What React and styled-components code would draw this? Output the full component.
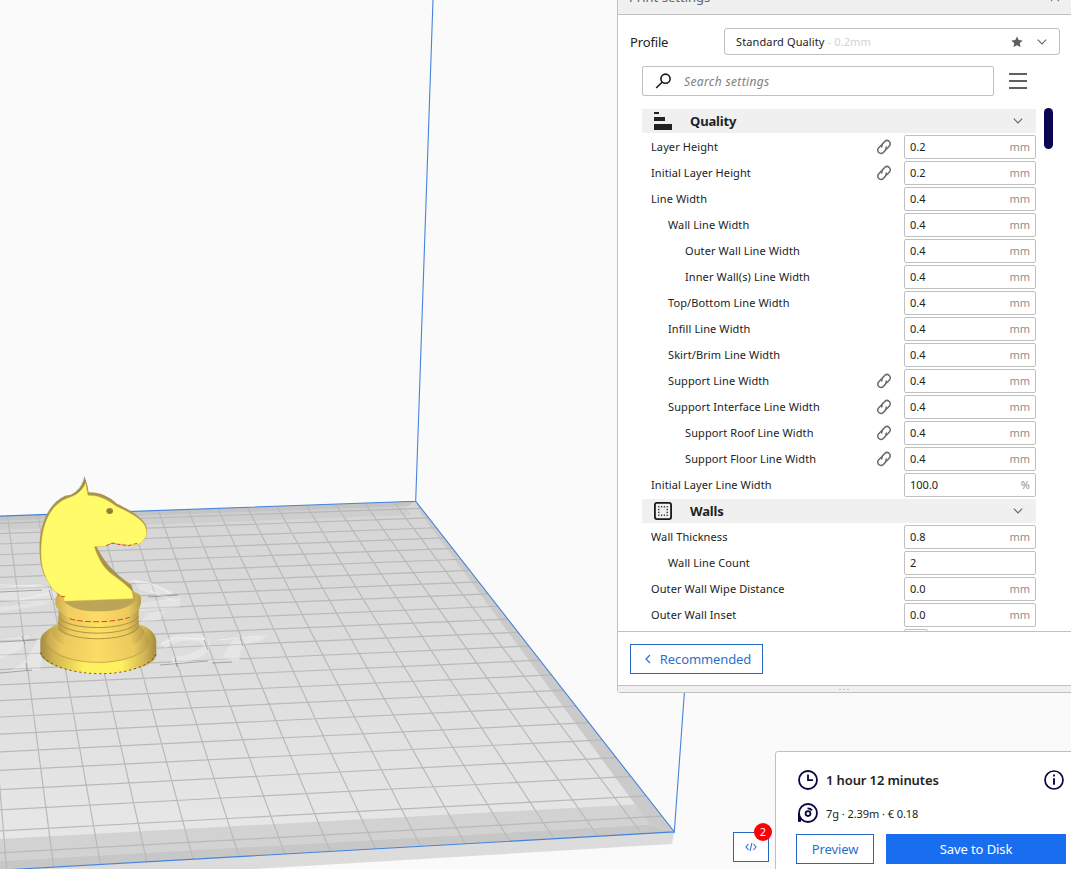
import React from "react";
import styled, { createGlobalStyle } from "styled-components";

const GlobalStyle = createGlobalStyle`
  * { box-sizing: border-box; }
  body {
    margin: 0;
    background: #fafafa;
    overflow: hidden;
    font-family: "Noto Sans", "Open Sans", sans-serif;
    color: #222;
  }
`;

const Window = styled.main`
  position: relative;
  width: 1071px;
  height: 869px;
  overflow: hidden;
  background: #fafafa;
`;

const Scene = styled.svg`
  display: block;
`;

const SettingsPanel = styled.section`
  position: absolute;
  left: 617px;
  top: -16px;
  width: 470px;
  height: 709px;
  display: flex;
  flex-direction: column;
  background: #fff;
  border: 1px solid #c0c0c0;
  border-radius: 3px;
`;

const PanelHeader = styled.header`
  flex: none;
  height: 30px;
  padding: 3px 26px 0 11px;
  display: flex;
  justify-content: space-between;
  background: #f0f0f0;
  border-bottom: 1px solid #c0c0c0;
  font-size: 13px;
  line-height: 18px;
  color: #666;
`;

const CloseIcon = styled.svg`
  margin-top: 4px;
`;

const ProfileRow = styled.div`
  flex: none;
  height: 27px;
  margin: 13px 26px 0 12px;
  display: flex;
  align-items: center;
  justify-content: space-between;
  font-size: 13px;
  letter-spacing: -0.15px;
`;

const ProfileSelect = styled.div`
  width: 336px;
  height: 27px;
  padding: 0 11px;
  display: flex;
  align-items: center;
  border: 1px solid #c0c0c0;
  border-radius: 3px;
  font-size: 11px;
  letter-spacing: 0.12px;
`;

const ProfileName = styled.span`
  flex: 1;
  white-space: pre;
`;

const Muted = styled.span`
  color: #d2d2d2;
`;

const SelectIcons = styled.span`
  display: flex;
  align-items: center;
  gap: 14px;
  padding-right: 1px;
`;

const SearchRow = styled.div`
  flex: none;
  height: 30px;
  margin: 11px 0 0 24px;
  display: flex;
  align-items: center;
  gap: 15px;
`;

const SearchBox = styled.div`
  width: 352px;
  height: 30px;
  padding-left: 12px;
  display: flex;
  align-items: center;
  gap: 11px;
  border: 1px solid #c0c0c0;
  border-radius: 2px;
  font-size: 12px;
  font-style: italic;
  letter-spacing: 0.36px;
  color: #808080;
`;

const ListArea = styled.div`
  flex: 1;
  min-height: 0;
  margin: 12px 0 0 24px;
  display: flex;
  align-items: flex-start;
  gap: 8px;
  overflow: hidden;
`;

const SettingsList = styled.div`
  width: 394px;
  height: 100%;
  overflow: hidden;
`;

const ScrollThumb = styled.div`
  width: 9px;
  height: 41px;
  border-radius: 5px;
  background: #08074f;
`;

const CategoryBar = styled.div`
  height: 24px;
  margin: 1px 0;
  padding: 0 13px 0 12px;
  display: flex;
  align-items: center;
  background: #f0f0f0;
  font-size: 13px;
  font-weight: 700;
  letter-spacing: -0.15px;
`;

const CategoryTitle = styled.span`
  flex: 1;
  padding-left: 18px;
`;

const Setting = styled.div`
  height: 26px;
  padding-left: ${(p) => 9 + p.$depth * 17}px;
  display: flex;
  align-items: center;
  font-size: 11px;
`;

const SettingLabel = styled.span`
  flex: 1;
  padding-bottom: 2px;
  white-space: nowrap;
  letter-spacing: 0.1px;
`;

const LinkSlot = styled.span`
  width: 28px;
  display: flex;
`;

const Field = styled.div`
  width: 132px;
  height: 24px;
  padding: 0 5px 2px;
  display: flex;
  align-items: center;
  justify-content: space-between;
  border: 1px solid #c0c0c0;
  border-radius: 2px;
`;

const Unit = styled.span`
  color: #909090;
`;

const PartialCheckbox = styled.div`
  width: 24px;
  height: 24px;
  margin: 1px 0 0 262px;
  border: 1px solid #c0c0c0;
  border-radius: 2px;
`;

const PanelFooter = styled.footer`
  flex: none;
  height: 54px;
  padding: 12px;
  border-top: 1px solid #c0c0c0;
`;

const ResizeHandle = styled.div`
  flex: none;
  height: 7px;
  display: flex;
  justify-content: center;
  align-items: center;
  gap: 2px;
  padding-right: 16px;
  background: #f0f0f0;
  border-top: 1px solid #c0c0c0;
`;

const HandleDot = styled.i`
  width: 2px;
  height: 1px;
  background: #c0c0c0;
`;

const Button = styled.button`
  flex: none;
  width: ${(p) => p.$width}px;
  height: 30px;
  padding: 0 0 0 ${(p) => p.$indent || 0}px;
  display: flex;
  align-items: center;
  justify-content: center;
  gap: 9px;
  border: 1px solid ${(p) => (p.$primary ? "#196ef0" : "#2368bd")};
  border-radius: 0;
  background: ${(p) => (p.$primary ? "#196ef0" : "#fff")};
  color: ${(p) => (p.$primary ? "#fff" : "#2a70d0")};
  font: 13px "Noto Sans", sans-serif;
  letter-spacing: -0.1px;
`;

const ActionPanel = styled.section`
  position: absolute;
  left: 775px;
  top: 751px;
  width: 312px;
  height: 130px;
  padding: 17px 20px 0 20px;
  display: flex;
  flex-direction: column;
  background: #fff;
  border: 1px solid #c0c0c0;
  border-radius: 3px;
`;

const EstimateRow = styled.div`
  height: ${(p) => p.$height}px;
  margin-bottom: ${(p) => p.$gap}px;
  padding: 0 2px;
  display: flex;
  align-items: center;
  gap: 8px;
  font-size: ${(p) => (p.$strong ? 13 : 11)}px;
  font-weight: ${(p) => (p.$strong ? 600 : 400)};
  letter-spacing: ${(p) => (p.$strong ? -0.12 : -0.06)}px;
`;

const EstimateText = styled.span`
  flex: 1;
`;

const ButtonRow = styled.div`
  display: flex;
  gap: 12px;
`;

const ScriptButton = styled.div`
  position: absolute;
  left: 733px;
  top: 832px;
  width: 36px;
  height: 30px;
  display: flex;
  align-items: center;
  justify-content: center;
  background: #fff;
  border: 1px solid #2368bd;
`;

const Badge = styled.span`
  position: absolute;
  left: 20px;
  top: -10px;
  width: 18px;
  height: 18px;
  border-radius: 50%;
  background: #fb0007;
  color: #fff;
  font-size: 11px;
  line-height: 18px;
  text-align: center;
`;

const Chevron = () => (
  <svg width="10" height="6" viewBox="0 0 10 6" fill="none" stroke="#666" strokeWidth="1.1">
    <path d="M.8.7 5 4.9 9.2.7" />
  </svg>
);

const LinkIcon = () => (
  <svg width="16" height="16" viewBox="0 0 16 16" fill="none" stroke="#6a6a6a" strokeWidth="1.5">
    <path d="M5.900 8.400C5.300 6.700 5.800 5.500 6.900 4.400L8.700 2.600A3.150 3.150 0 0 1 13.400 7L11.600 8.900Q10.800 9.800 9.300 9.900" />
    <path d="M10.100 7.600C10.700 9.300 10.200 10.500 9.100 11.600L7.300 13.400A3.150 3.150 0 0 1 2.600 9L4.400 7.100Q5.200 6.200 6.700 6.100" />
  </svg>
);

const StarIcon = () => (
  <svg width="12" height="12" viewBox="0 0 12 12" fill="#606060">
    <path d="M6 .5 7.7 4l3.9.5-2.8 2.7.7 3.9L6 9.2l-3.5 1.9.7-3.9L.4 4.500 4.300 4z" />
  </svg>
);

const SearchIcon = () => (
  <svg width="18" height="18" viewBox="0 0 18 18" fill="none" stroke="#191919" strokeWidth="1.6">
    <circle cx="10.5" cy="6.7" r="4.6" />
    <path d="M7.3 10 1.2 16" />
  </svg>
);

const MenuIcon = () => (
  <svg width="18" height="18" viewBox="0 0 18 18" fill="#606060" shapeRendering="crispEdges">
    <path d="M0 1h18v2H0zM0 8h18v2H0zM0 15h18v2H0z" />
  </svg>
);

const QualityIcon = () => (
  <svg width="18" height="18" viewBox="0 0 18 18" fill="#222" shapeRendering="crispEdges">
    <path d="M0 0h5v2H0zM0 5h11v4H0zM0 12h18v6H0z" />
  </svg>
);

const dots = [4, 7, 10, 13];

const WallsIcon = () => (
  <svg width="18" height="18" viewBox="0 0 18 18" fill="#222">
    <rect x=".9" y=".9" width="16.2" height="16.2" rx="2" fill="none" stroke="#191919" strokeWidth="1.8" />
    {[4.3, 7.1, 9.9, 12.7].map((x) =>
      [4.3, 7.1, 9.9, 12.7]
        .filter((y) => x < 5 || x > 12 || y < 5 || y > 12)
        .map((y) => <rect key={`${x}-${y}`} x={x - 0.15} y={y - 0.15} width="1.3" height="1.3" />)
    )}
  </svg>
);

const ClockIcon = () => (
  <svg width="20" height="20" viewBox="0 0 20 20" fill="none" stroke="#08073f" strokeWidth="1.8">
    <circle cx="10" cy="10" r="9" />
    <path d="M10 4.5V10.2h5" />
  </svg>
);

const SpoolIcon = () => (
  <svg width="20" height="20" viewBox="0 0 20 20" fill="none" stroke="#08073f" strokeWidth="1.8">
    <circle cx="10" cy="10" r="9" />
    <path d="M1 10V18.800" strokeWidth="2" />
    <path d="M1 13v5.800h2V15z" fill="#08073f" stroke="none" />
    <circle cx="10" cy="10.600" r="2.400" />
    <path d="M9.500 5.300A5.300 5.300 0 0 1 14 7.400" />
  </svg>
);

const InfoIcon = () => (
  <svg width="20" height="20" viewBox="0 0 20 20" fill="none" stroke="#08073f" strokeWidth="1.7">
    <circle cx="10" cy="10" r="9" />
    <path d="M10 4.6v2M10 8.2v6.6" strokeWidth="1.9" />
  </svg>
);

// Projects build-plate coordinates (in 10 mm cells from the front-right corner) to the screen.
const FR = [674.3, 831.9];
const BR = [415.7, 501.3];
const FL = [6.7, 869.8];
const BL = [-23, 516.9];
const COLS = 14.75;
const ROWS = 23.5;
const det = (FL[0] - BL[0]) * (BR[1] - BL[1]) - (BR[0] - BL[0]) * (FL[1] - BL[1]);
const rx = BL[0] + FR[0] - BR[0] - FL[0];
const ry = BL[1] + FR[1] - BR[1] - FL[1];
const P = (rx * (BR[1] - BL[1]) - (BR[0] - BL[0]) * ry) / det;
const Q = ((FL[0] - BL[0]) * ry - rx * (FL[1] - BL[1])) / det;

function project(u, v) {
  const s = u / COLS;
  const t = v / ROWS;
  const w = 1 + P * s + Q * t;
  return [0, 1].map((i) =>
    ((FR[i] + s * (FL[i] * (1 + P) - FR[i]) + t * (BR[i] * (1 + Q) - FR[i])) / w).toFixed(2)
  );
}
const poly = (...pts) => pts.map(([u, v]) => project(u, v).join(",")).join(" ");
const seg = (a, b) => `M${project(...a).join(" ")}L${project(...b).join(" ")}`;

const gridPath = [
  ...Array.from({ length: 17 }, (_, i) => seg([i + 0.75, 0], [i + 0.75, ROWS])),
  ...Array.from({ length: 23 }, (_, i) => seg([0, i + 0.75], [18, i + 0.75])),
].join("");

const BuildPlate = () => (
  <g>
    <polygon points="674,832 672,844 253,869 -40,884 0,869" fill="#dcdcdc" />
    <polygon points={poly([0, 0], [18, 0], [18, ROWS], [0, ROWS])} fill="url(#plate)" />
    <polygon points="-10,839.5 636,804.5 650,824.5 -10,861.5" fill="#d2d2d2" />
    <polygon points="-10,861.5 650,824.5 674.3,831.9 6.7,869.8 -10,871" fill="#c7c7c7" />
    <polygon points="415.7,501.3 421,514 650,824.5 674.3,831.9" fill="#cacaca" />
    <polygon points={poly([0, ROWS], [18, ROWS], [18, 23], [0.4, 23])} fill="#c4c4c4" />
    <polygon points={poly([0.5, 23], [18, 23], [18, 22.1], [0.5, 22.1])} fill="#cecece" />
    <path d={gridPath} stroke="#b9b9b9" strokeWidth="1.2" fill="none" />
  </g>
);

const PlateLogo = () => (
  <g>
    <g fill="#fff" fillOpacity=".26">
      <path d="M0 587 40 584 65 596 40 604 0 600zM0 607 45 602 50 604 0 612z" />
      <path d="M132 579 155 584 173 592 165 598 140 590zM140 603 180 597 180 607 140 611z" />
      <path d="M148 613 165 611 160 620 140 623zM0 640 30 635 20 650 0 659zM24 662 40 637 46 640 40 670 8 672z" />
      <path d="M222 657 233 640 268 635 262 640 243 645 238 661z" />
    </g>
    <path d="M163 646Q172 637 190 637T206 648Q200 657 172 661" fill="none" stroke="#fff" strokeOpacity=".28" strokeWidth="7" />
    <g fill="none" stroke="#fff" strokeOpacity=".5" strokeWidth="1">
      <path d="M0 585 36 586M20 600 50 593M130 581 150 583 172 594M150 591 175 601M160 645 175 638 205 639M218 640 260 636M170 663 240 659" />
    </g>
    <g fill="none" stroke="#666" strokeOpacity=".5" strokeWidth="1">
      <path d="M0 592 42 590M148 597 178 595M0 642 36 640M22 636 25 644M49 590 52 600M204 640 208 650M240 637 243 646M160 665 208 661M212 663 232 662M0 673 32 670M175 658 177 667M26 663 27 671" />
    </g>
  </g>
);

const Knight = () => (
  <g transform="translate(30 470) scale(.33333)">
    <path d="M31 512C31 490 55 480 75 465L335 465C360 475 379 492 379 515V555C374 590 285 612 202 611 115 610 32 580 31 550z" fill="url(#base)" />
    <path d="M31 548C50 585 120 609 202 611S365 588 378 552" fill="none" stroke="#40391c" strokeWidth="2.5" strokeDasharray="6 9" />
    <path d="M49 512C55 545 120 575 205 575S350 550 358 512C356 495 340 482 325 462H85C70 482 50 490 49 512z" fill="url(#foot)" />
    <path d="M49 518C60 554 130 577 205 577S350 553 358 516" fill="none" stroke="#b59a48" strokeWidth="2.5" />
    <path d="M66 482C66 517 120 542 205 542S344 516 342 482L322 456H88z" fill="url(#foot)" />
    <path d="M86 420 84 476C104 520 306 520 326 474V418z" fill="url(#stem)" />
    <g fill="none" stroke="#a98d43" strokeWidth="2.8">
      <path d="M84 440C110 484 300 484 326 438" />
      <path d="M84 456C110 501 300 501 326 454" />
      <path d="M84 472C110 518 300 518 326 470" />
    </g>
    <path d="M76 390C78 365 105 358 205 357S332 366 333 386V398C330 432 280 458 205 458S82 432 76 402z" fill="url(#rim)" />
    <path d="M101 393 316 372 316 392C300 413 260 424 205 424S120 414 101 393z" fill="#bca557" />
    <path d="M119 446C155 459 250 459 298 442" fill="none" stroke="#e32612" strokeWidth="2.6" strokeDasharray="17 7" />
    <path d="M122 74C145 65 160 44 164 20L172 45 176 67C205 66 235 77 261 101 291 115 335 139 348 166 354 180 351 194 340 207L200 229C220 274 250 307 304 345L312 368 300 380 100 376C62 356 34 316 30 263 23 187 43 107 105 77z" fill="#a9944b" />
    <path d="M122 81C146 70 159 58 167 38L174 76C206 75 235 90 259 109 286 121 325 139 342 162 349 172 351 183 349 195 342 215 326 226 307 227L246 219 226 229 193 230C205 266 221 296 252 317 273 333 297 350 307 365L310 386 102 394 101 380C62 367 35 312 33 259 31 188 47 103 122 81z" fill="#fffb69" stroke="#d9b04a" strokeWidth="1.5" />
    <path d="M125 76C147 60 158 42 164 19M136 74C151 61 158 48 164 31" fill="none" stroke="#776b39" strokeWidth="2" strokeDasharray="3 2" />
    <path d="M228 227 247 219 262 223 295 227 325 219M80 370 93 380 107 379" fill="none" stroke="#dc371b" strokeWidth="2.5" strokeDasharray="12 5" />
    <ellipse cx="239" cy="123" rx="10" ry="9" fill="#96853f" />
    <path d="m233 120 7 8 7-5" fill="none" stroke="#70652f" strokeWidth="2" />
  </g>
);

const Gradient = ({ id, stops, vertical }) => (
  <linearGradient id={id} x1="0" y1="0" x2={vertical ? 0 : 1} y2={vertical ? 1 : 0}>
    {stops.map(([offset, color]) => (
      <stop key={offset} offset={offset} stopColor={color} />
    ))}
  </linearGradient>
);

const Viewport3D = () => (
  <Scene width="1071" height="869" viewBox="0 0 1071 869">
    <defs>
      <Gradient id="plate" vertical stops={[[0, "#d5d5d5"], [0.5, "#dfdfdf"], [1, "#e9e9e9"]]} />
      <Gradient id="base" stops={[[0, "#a48c42"], [0.12, "#d2b452"], [0.38, "#fff060"], [0.7, "#fff060"], [0.9, "#d2b452"], [1, "#a48c42"]]} />
      <Gradient id="foot" stops={[[0, "#c3a54d"], [0.15, "#ebca5e"], [0.5, "#fcdc65"], [0.85, "#ebca5e"], [1, "#b89b48"]]} />
      <Gradient id="stem" stops={[[0, "#b69a47"], [0.15, "#ebcb5e"], [0.5, "#ffe066"], [0.85, "#ebcb5e"], [1, "#b69a47"]]} />
      <Gradient id="rim" stops={[[0, "#cbac50"], [0.15, "#f0ce60"], [0.5, "#ffdb66"], [0.85, "#eccb5e"], [1, "#b99d4b"]]} />
    </defs>
    <BuildPlate />
    <PlateLogo />
    <g stroke="#4583d9" strokeWidth="1.1" fill="none">
      <path d="M433 0 415.7 501.3 674.3 831.9 694 560M415.7 501.3-23 516.9M674.3 831.9 6.7 869.8" />
    </g>
    <Knight />
  </Scene>
);

const sections = [
  {
    title: "Quality",
    Icon: QualityIcon,
    rows: [
      ["Layer Height", 0, "0.2", "mm", true],
      ["Initial Layer Height", 0, "0.2", "mm", true],
      ["Line Width", 0, "0.4", "mm"],
      ["Wall Line Width", 1, "0.4", "mm"],
      ["Outer Wall Line Width", 2, "0.4", "mm"],
      ["Inner Wall(s) Line Width", 2, "0.4", "mm"],
      ["Top/Bottom Line Width", 1, "0.4", "mm"],
      ["Infill Line Width", 1, "0.4", "mm"],
      ["Skirt/Brim Line Width", 1, "0.4", "mm"],
      ["Support Line Width", 1, "0.4", "mm", true],
      ["Support Interface Line Width", 1, "0.4", "mm", true],
      ["Support Roof Line Width", 2, "0.4", "mm", true],
      ["Support Floor Line Width", 2, "0.4", "mm", true],
      ["Initial Layer Line Width", 0, "100.0", "%"],
    ],
  },
  {
    title: "Walls",
    Icon: WallsIcon,
    rows: [
      ["Wall Thickness", 0, "0.8", "mm"],
      ["Wall Line Count", 1, "2", ""],
      ["Outer Wall Wipe Distance", 0, "0.0", "mm"],
      ["Outer Wall Inset", 0, "0.0", "mm"],
    ],
  },
];

const SettingRow = ({ row: [label, depth, value, unit, linked] }) => (
  <Setting $depth={depth}>
    <SettingLabel>{label}</SettingLabel>
    <LinkSlot>{linked && <LinkIcon />}</LinkSlot>
    <Field>
      <span>{value}</span>
      <Unit>{unit}</Unit>
    </Field>
  </Setting>
);

export default function App() {
  return (
    <Window>
      <GlobalStyle />
      <Viewport3D />

      <SettingsPanel>
        <PanelHeader>
          <span>Print settings</span>
          <CloseIcon width="10" height="10" viewBox="0 0 10 10" stroke="#777" strokeWidth="1.1">
            <path d="m1 1 8 8M9 1 1 9" />
          </CloseIcon>
        </PanelHeader>
        <ProfileRow>
          <span>Profile</span>
          <ProfileSelect>
            <ProfileName>
              Standard Quality<Muted> - 0.2mm</Muted>
            </ProfileName>
            <SelectIcons>
              <StarIcon />
              <Chevron />
            </SelectIcons>
          </ProfileSelect>
        </ProfileRow>
        <SearchRow>
          <SearchBox>
            <SearchIcon />
            <span>Search settings</span>
          </SearchBox>
          <MenuIcon />
        </SearchRow>
        <ListArea>
          <SettingsList>
            {sections.map(({ title, Icon, rows }) => (
              <React.Fragment key={title}>
                <CategoryBar>
                  <Icon />
                  <CategoryTitle>{title}</CategoryTitle>
                  <Chevron />
                </CategoryBar>
                {rows.map((row) => (
                  <SettingRow key={row[0]} row={row} />
                ))}
              </React.Fragment>
            ))}
            <PartialCheckbox />
          </SettingsList>
          <ScrollThumb />
        </ListArea>
        <PanelFooter>
          <Button $width={133} $indent={3}>
            <svg width="6" height="10" viewBox="0 0 6 10" fill="none" stroke="#2a70d0" strokeWidth="1.2">
              <path d="M5 1 1 5l4 4" />
            </svg>
            Recommended
          </Button>
        </PanelFooter>
        <ResizeHandle>
          <HandleDot />
          <HandleDot />
          <HandleDot />
        </ResizeHandle>
      </SettingsPanel>

      <ScriptButton>
        <svg width="12" height="10" viewBox="0 0 12 10" fill="none" stroke="#2b6fd0" strokeWidth="1.1">
          <path d="M3.5 2 1 5l2.5 3M8.5 2 11 5 8.5 8M6.9 1 5.1 9" />
        </svg>
        <Badge>2</Badge>
      </ScriptButton>

      <ActionPanel>
        <EstimateRow $height={22} $gap={6} $strong>
          <ClockIcon />
          <EstimateText>1 hour 12 minutes</EstimateText>
          <InfoIcon />
        </EstimateRow>
        <EstimateRow $height={32} $gap={5}>
          <SpoolIcon />
          <EstimateText>7g · 2.39m · € 0.18</EstimateText>
        </EstimateRow>
        <ButtonRow>
          <Button $width={78}>Preview</Button>
          <Button $width={180} $primary>
            Save to Disk
          </Button>
        </ButtonRow>
      </ActionPanel>
    </Window>
  );
}
